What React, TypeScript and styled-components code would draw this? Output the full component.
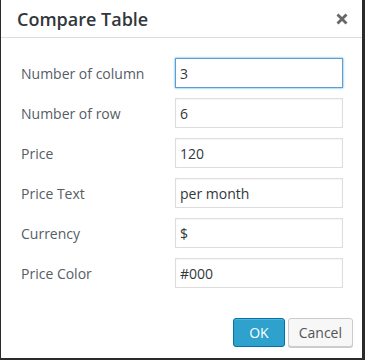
import styled, { createGlobalStyle } from "styled-components"

const GlobalStyle = createGlobalStyle`
  html, body {
    margin: 0;
    padding: 0;
    background: #2b2b2b;
    font-family: "Open Sans", "Liberation Sans", sans-serif;
  }
`

const fields = [
    { label: "Number of column", value: "3", focused: true },
    { label: "Number of row", value: "6" },
    { label: "Price", value: "120" },
    { label: "Price Text", value: "per month" },
    { label: "Currency", value: "$" },
    { label: "Price Color", value: "#000" },
]

export default function App() {
    return (
        <>
            <GlobalStyle />
            <Dialog>
                <Header>
                    <Title>Compare Table</Title>
                    <Close aria-label="close">
                        <svg width="12" height="12" viewBox="0 0 12 12">
                            <path d="M1.5 1.5 L10.5 10.5 M10.5 1.5 L1.5 10.5" stroke="#666666" strokeWidth="2.8" />
                        </svg>
                    </Close>
                </Header>
                <Body>
                    {fields.map((f) => (
                        <Row key={f.label}>
                            <Label>{f.label}</Label>
                            <Field $focused={f.focused} defaultValue={f.value} />
                        </Row>
                    ))}
                </Body>
                <Footer>
                    <Button $primary>OK</Button>
                    <Button>Cancel</Button>
                </Footer>
            </Dialog>
        </>
    )
}

const Dialog = styled.div`
  margin-left: 1px;
  width: 361px;
  height: 358px;
  background: #fff;
  display: flex;
  flex-direction: column;
  box-sizing: border-box;
`

const Header = styled.div`
  height: 37px;
  border-bottom: 1px solid #dddddd;
  display: flex;
  align-items: center;
  justify-content: space-between;
  padding: 0 14px 0 16px;
`

const Title = styled.h1`
  margin: 0;
  font-size: 18px;
  font-weight: 600;
  color: #32373c;
`

const Close = styled.button`
  border: 0;
  background: none;
  padding: 0;
  display: flex;
  margin-top: 1px;
`

const Body = styled.div`
  display: flex;
  flex-direction: column;
  gap: 10px;
  padding: 20px 19px 0 20px;
`

const Row = styled.div`
  display: flex;
  align-items: center;
  height: 30px;
`

const Label = styled.label`
  width: 154px;
  font-size: 14px;
  color: #555d66;
`

const Field = styled.input<{ $focused?: boolean }>`
  width: 168px;
  height: 30px;
  box-sizing: border-box;
  padding: 0 4px;
  font-family: "Open Sans", "Liberation Sans", sans-serif;
  font-size: 14px;
  color: #32373c;
  outline: none;
  border: 1px solid ${(p) => (p.$focused ? "#5b9dd9" : "#dddddd")};
  box-shadow: ${(p) => (p.$focused ? "0 0 2px rgba(30,140,190,0.8)" : "inset 0 1px 2px rgba(0,0,0,0.04)")};
`

const Footer = styled.div`
  margin-top: auto;
  display: flex;
  justify-content: flex-end;
  gap: 3px;
  padding: 0 9px 11px 0;
`

const Button = styled.button<{ $primary?: boolean }>`
  height: 29px;
  padding: 0 ${(p) => (p.$primary ? "15px" : "10px")};
  font-family: "Open Sans", "Liberation Sans", sans-serif;
  font-size: 14px;
  border-radius: 3px;
  border: 1px solid ${(p) => (p.$primary ? "#0073aa" : "#cccccc")};
  background: ${(p) => (p.$primary ? "#2ea2cc" : "#f7f7f7")};
  color: ${(p) => (p.$primary ? "#ffffff" : "#555555")};
  box-shadow: ${(p) => (p.$primary ? "inset 0 1px 0 rgba(120,200,230,0.5)" : "0 1px 0 #cccccc")};
`
